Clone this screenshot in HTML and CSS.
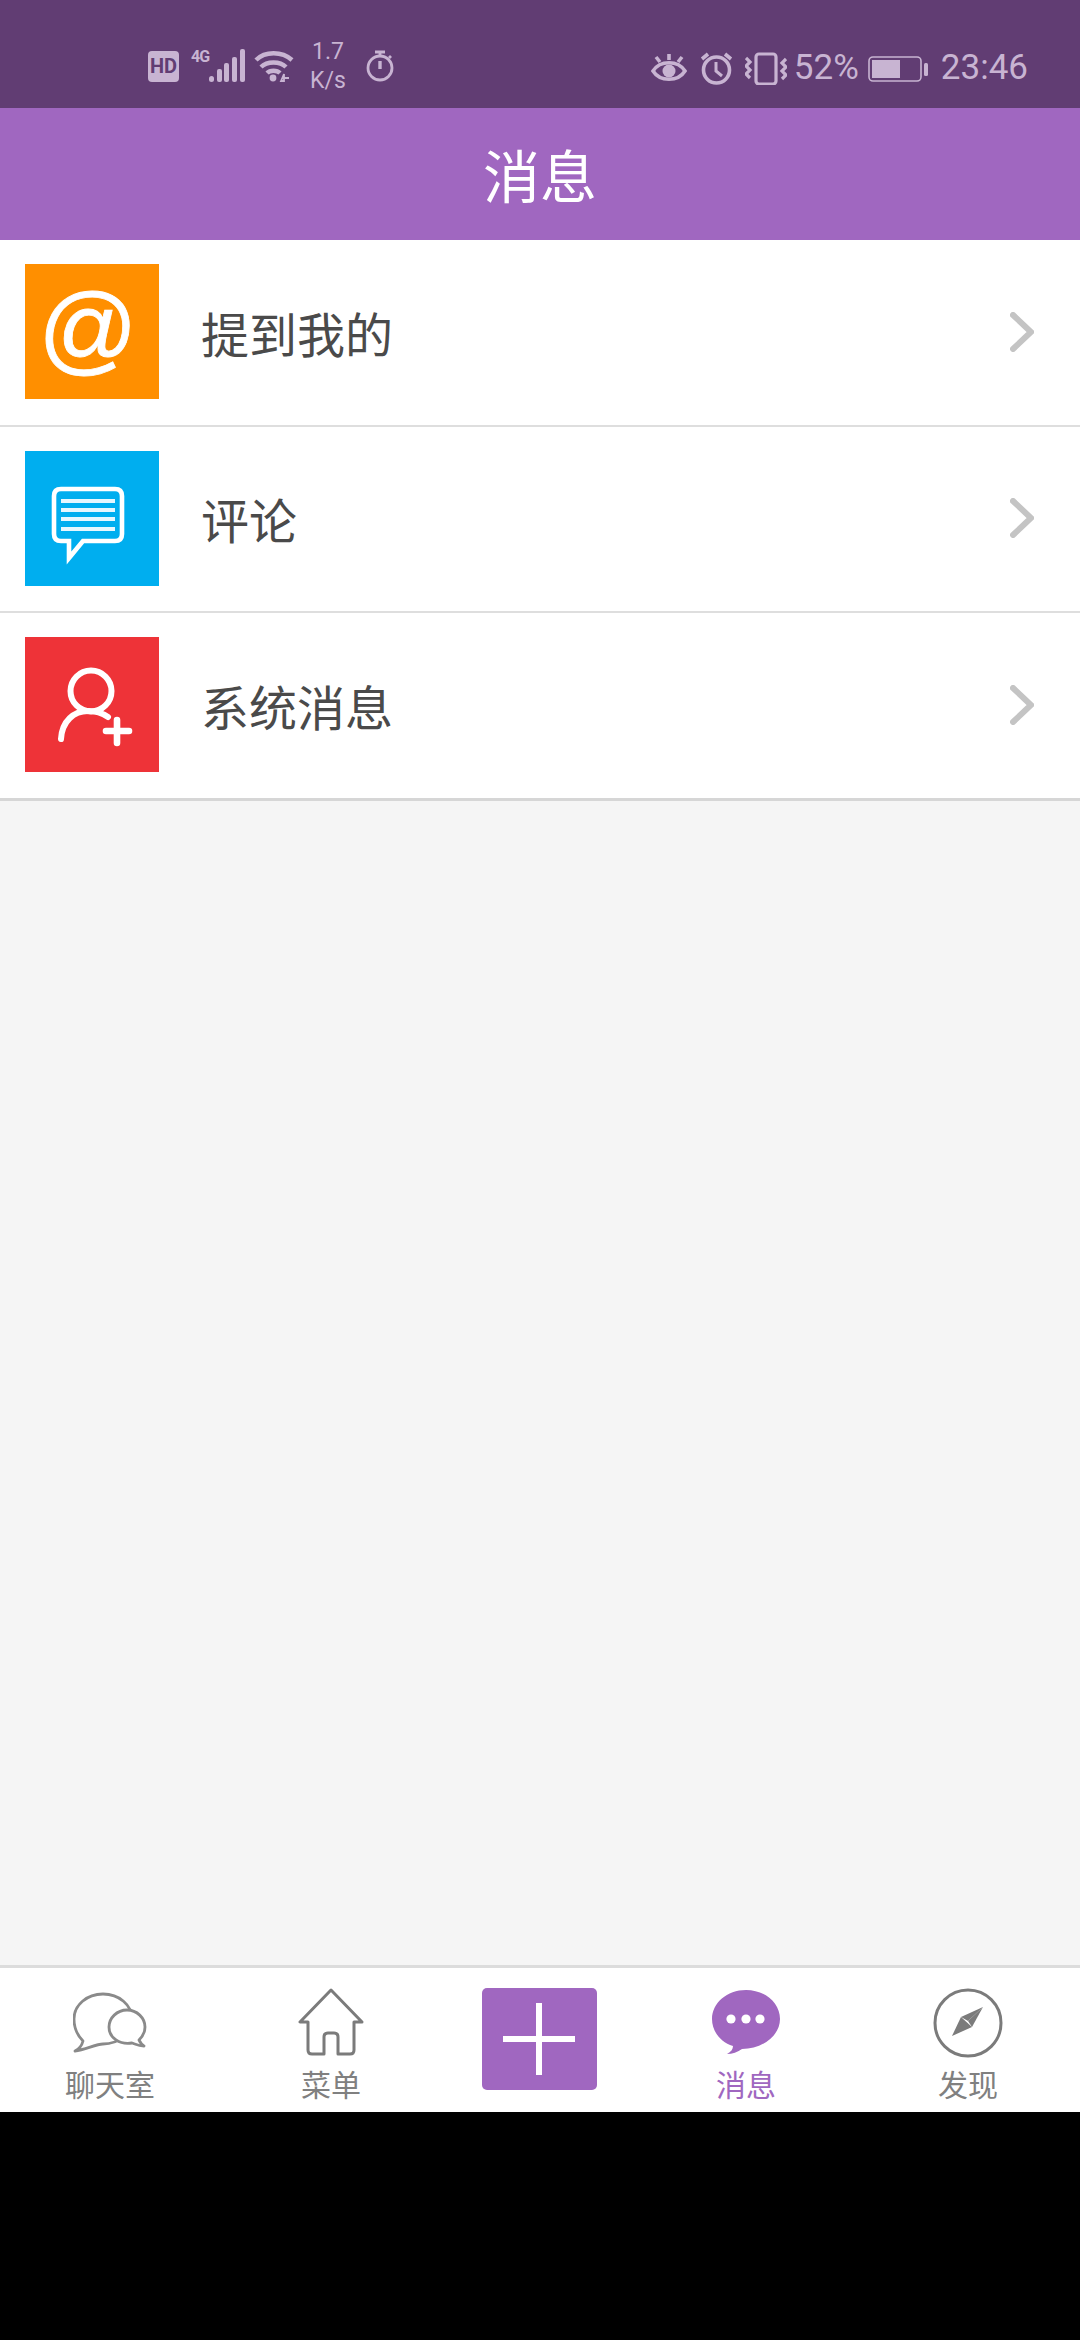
FILE: index.html
```html
<!DOCTYPE html>
<html lang="zh-CN">
<head>
  <meta charset="UTF-8">
  <meta name="viewport" content="width=device-width, initial-scale=1">
  <title>消息</title>
  <link rel="stylesheet" href="styles.css">
</head>
<body>

<div class="statusbar">
  <div class="status-left">
    <span class="hd">HD</span>
    <span class="net">4G</span>
    <svg class="signal" width="36" height="34" viewBox="0 0 36 34" fill="currentColor">
      <rect x="0" y="27" width="5" height="6" rx="2.5"/>
      <rect x="8" y="20" width="5" height="13" rx="2"/>
      <rect x="15" y="14" width="5" height="19" rx="2"/>
      <rect x="23" y="8" width="5" height="25" rx="2"/>
      <rect x="31" y="0" width="5" height="33" rx="2"/>
    </svg>
    <svg class="wifi" width="40" height="34" viewBox="0 0 40 34" fill="none" stroke="currentColor" stroke-width="4.4">
      <path d="M2 11C11 2 28 2 38 11"/>
      <path d="M7 18C13 12 26 12 32 18"/>
      <path d="M13 24C16 21 23 21 26 24"/>
      <circle cx="19" cy="29" r="3.4" fill="currentColor" stroke="none"/>
      <path d="M27 32l3-7v7zM29 29h6" stroke-width="1.8"/>
    </svg>
    <div class="speed"><span>1.7</span><span>K/s</span></div>
    <svg class="timer" width="28" height="32" viewBox="0 0 28 32" fill="none" stroke="currentColor" stroke-width="2.8">
      <circle cx="14" cy="18" r="12"/>
      <path d="M9 2h10M14 2v4M25 6l-2 2"/>
      <path d="M14 11v8" stroke-width="3.4"/>
    </svg>
  </div>
  <div class="status-right">
    <svg class="eye" width="36" height="30" viewBox="0 0 36 30" fill="none" stroke="currentColor" stroke-width="3.6">
      <path d="M2 18C9 7 27 7 34 18C27 29 9 29 2 18Z"/>
      <circle cx="18" cy="18" r="6.5" fill="currentColor" stroke="none"/>
      <path d="M18 1v6M5 4l4 5M31 4l-4 5"/>
    </svg>
    <svg class="alarm" width="33" height="33" viewBox="0 0 33 33" fill="none" stroke="currentColor" stroke-width="3.6">
      <circle cx="16.5" cy="18" r="13"/>
      <path d="M16 10v9l6 5" stroke-width="3"/>
      <path d="M2 7l6-5M31 7l-6-5"/>
    </svg>
    <svg class="vibrate" width="42" height="33" viewBox="0 0 42 33" fill="none" stroke="currentColor" stroke-width="3.2">
      <rect x="11" y="2" width="20" height="30" rx="3"/>
      <path d="M1 6l4 4-4 4 4 4-4 4 4 4" stroke-width="3.2"/>
      <path d="M41 7l-4 4 4 4-4 4 4 4-4 4" stroke-width="3.2"/>
    </svg>
    <span class="percent">52%</span>
    <svg class="battery" width="61" height="30" viewBox="0 0 61 30">
      <rect x="1" y="4" width="52" height="24" rx="4" fill="none" stroke="currentColor" stroke-width="1.6"/>
      <rect x="4" y="7" width="28" height="18" fill="currentColor"/>
      <rect x="56" y="10" width="4" height="13" rx="1.5" fill="currentColor"/>
    </svg>
    <span class="clock">23:46</span>
  </div>
</div>

<header class="titlebar">
  <h1>消息</h1>
</header>

<section class="list">
  <div class="row">
    <div class="tile tile-orange"><span class="at">@</span></div>
    <span class="row-label">提到我的</span>
    <svg class="chevron" width="24" height="40" viewBox="0 0 24 40" fill="none" stroke="#c4c4c4" stroke-width="6" stroke-linecap="round">
      <path d="M3 3l18 17-18 17"/>
    </svg>
  </div>
  <div class="row row-mid">
    <div class="tile tile-blue">
      <svg width="134" height="135" viewBox="0 0 134 135" fill="none" stroke="#fff">
        <path d="M36 38H90Q97 38 97 45V83Q97 90 90 90H58L44 107V90H36Q29 90 29 83V45Q29 38 36 38Z" stroke-width="4.6"/>
        <path d="M36 50H90M36 59H90M36 68H90M36 78H90" stroke-width="4" opacity="0.9"/>
      </svg>
    </div>
    <span class="row-label">评论</span>
    <svg class="chevron" width="24" height="40" viewBox="0 0 24 40" fill="none" stroke="#c4c4c4" stroke-width="6" stroke-linecap="round">
      <path d="M3 3l18 17-18 17"/>
    </svg>
  </div>
  <div class="row row-last">
    <div class="tile tile-red">
      <svg width="134" height="135" viewBox="0 0 134 135" fill="none" stroke="#fff" stroke-width="6" stroke-linecap="round">
        <circle cx="66" cy="54" r="20.5"/>
        <path d="M36 102C37 84 49 74 63 74C71 74 77 76 83 80"/>
        <path d="M81 94H104M92 83V106" stroke-width="6.6"/>
      </svg>
    </div>
    <span class="row-label">系统消息</span>
    <svg class="chevron" width="24" height="40" viewBox="0 0 24 40" fill="none" stroke="#c4c4c4" stroke-width="6" stroke-linecap="round">
      <path d="M3 3l18 17-18 17"/>
    </svg>
  </div>
</section>

<main class="empty"></main>

<nav class="tabbar">
  <div class="tab">
    <svg width="74" height="70" viewBox="0 -2 74 70" fill="#fff" stroke="#8a8a8a" stroke-width="2.8" stroke-linejoin="round">
      <path d="M2 61C6 59 9 55 10 51C4 45 1 37 1 29C1 15 14 4 30 4C46 4 59 15 59 29C59 43 46 54 30 54C23 54 12 60 2 61Z"/>
      <path d="M71 56C66 56 62 54 59 53C47 55 36 48 36 37C36 28 44 20 54 20C64 20 72 28 72 37C72 43 69 47 66 50C67 52 69 55 71 56Z"/>
    </svg>
    <span class="tab-label">聊天室</span>
  </div>
  <div class="tab">
    <svg width="66" height="70" viewBox="0 0 66 70" fill="none" stroke="#7b7b7b" stroke-width="3" stroke-linejoin="round">
      <path d="M33 2L2 34H10V62Q10 66 14 66H26V49Q26 45 30 45H36Q40 45 40 49V66H52Q56 66 56 62V34H64Z"/>
    </svg>
    <span class="tab-label">菜单</span>
  </div>
  <div class="tab">
    <div class="add">
      <svg width="72" height="72" viewBox="0 0 72 72" stroke="#fff" stroke-width="6">
        <path d="M0 36H72M36 0V72"/>
      </svg>
    </div>
  </div>
  <div class="tab tab-active">
    <svg width="68" height="70" viewBox="0 0 68 70">
      <path d="M34 2C53 2 68 15 68 31C68 48 50 61 30 61C26 64 20 66 15 66C19 64 21 61 21 58C8 54 0 43 0 31C0 15 15 2 34 2Z" fill="#a067c0"/>
      <circle cx="19" cy="31" r="4.6" fill="#fff"/>
      <circle cx="34" cy="31" r="4.6" fill="#fff"/>
      <circle cx="48" cy="31" r="4.6" fill="#fff"/>
    </svg>
    <span class="tab-label">消息</span>
  </div>
  <div class="tab">
    <svg width="70" height="70" viewBox="0 0 70 70">
      <circle cx="35" cy="35" r="33" fill="none" stroke="#7b7b7b" stroke-width="3"/>
      <path d="M19 48L28 29L39 39Z" fill="#7b7b7b"/>
      <path d="M50 19L28 29L35 33Z" fill="#7b7b7b"/>
      <path d="M50 19L35 33L39 39Z" fill="#7b7b7b"/>
    </svg>
    <span class="tab-label">发现</span>
  </div>
</nav>

<div class="navbar-space"></div>

</body>
</html>
```

FILE: styles.css
```css
* {
  box-sizing: border-box;
}
html, body {
  margin: 0;
  padding: 0;
  height: 2340px;
}
body {
  display: flex;
  flex-direction: column;
  font-family: "Noto Sans CJK SC", Roboto, sans-serif;
  background-color: #f5f5f5;
}
.statusbar {
  height: 108px;
  flex: none;
  padding: 24px 52px 0 148px;
  display: flex;
  justify-content: space-between;
  align-items: center;
  background-color: #613d73;
  color: #c8b4d2;
  font-family: Roboto, sans-serif;
}
.status-left, .status-right {
  display: flex;
  align-items: center;
}
.status-right {
  padding-top: 4px;
}
.hd {
  width: 31px;
  height: 31px;
  border-radius: 4px;
  background-color: #c8b4d2;
  color: #613d73;
  font-size: 20px;
  font-weight: 700;
  line-height: 31px;
  text-align: center;
}
.net {
  width: 18px;
  margin-left: 12px;
  margin-top: -19px;
  font-size: 16px;
  font-weight: 700;
  line-height: 14px;
  white-space: nowrap;
  letter-spacing: -1px;
}
.wifi {
  margin-left: 9px;
}
.speed {
  width: 40px;
  margin-left: 14px;
  display: flex;
  flex-direction: column;
  align-items: center;
  font-size: 23px;
  line-height: 29px;
}
.timer {
  margin-left: 18px;
}
.alarm {
  margin-left: 13px;
}
.vibrate {
  margin-left: 12px;
}
.percent {
  margin-left: 7px;
  font-size: 35px;
  line-height: 40px;
}
.battery {
  margin-left: 9px;
}
.clock {
  margin-left: 12px;
  font-size: 35px;
  line-height: 40px;
}
.titlebar {
  height: 132px;
  padding-bottom: 2px;
  flex: none;
  display: flex;
  align-items: center;
  justify-content: center;
  background-color: #a067c0;
  color: white;
}
.titlebar h1 {
  margin: 0;
  font-size: 57px;
  font-weight: 400;
  line-height: 70px;
}
.list {
  flex: none;
  background: white;
}
.row {
  height: 187px;
  padding: 0 46px 2px 25px;
  display: flex;
  align-items: center;
  border-bottom: 2px solid #dedede;
}
.row-mid {
  height: 186px;
}
.row-last {
  height: 188px;
  border-bottom: 3px solid #d6d6d6;
}
.tile {
  width: 134px;
  height: 135px;
  flex: none;
  display: flex;
  align-items: center;
  justify-content: center;
}
.tile-orange {
  background-color: #ff8f00;
}
.tile-blue {
  background-color: #00aeef;
}
.tile-red {
  background-color: #ee3338;
}
.at {
  margin: -8px 8px 0 0;
  color: white;
  font-family: "Liberation Sans", sans-serif;
  font-size: 98px;
  line-height: 98px;
  -webkit-text-stroke: 0.8px white;
}
.row-label {
  flex: 1;
  margin-left: 42px;
  color: #4a4a4a;
  font-size: 48px;
  font-weight: 400;
  line-height: 60px;
}
.chevron {
  flex: none;
}
.empty {
  flex: 1;
}
.tabbar {
  height: 147px;
  flex: none;
  display: grid;
  grid-template-columns: 220px 222px 194px 220px 224px;
  border-top: 3px solid #dcdcdc;
  background: white;
}
.tab {
  padding-top: 20px;
  display: flex;
  flex-direction: column;
  align-items: center;
  color: #808080;
}
.tab svg {
  flex: none;
}
.tab-label {
  margin-top: 5px;
  font-size: 30px;
  line-height: 40px;
}
.tab-active {
  color: #a067c0;
}
.add {
  width: 115px;
  height: 102px;
  display: flex;
  align-items: center;
  justify-content: center;
  border-radius: 5px;
  background-color: #a067c0;
}
.navbar-space {
  height: 228px;
  flex: none;
  background: black;
}
```
